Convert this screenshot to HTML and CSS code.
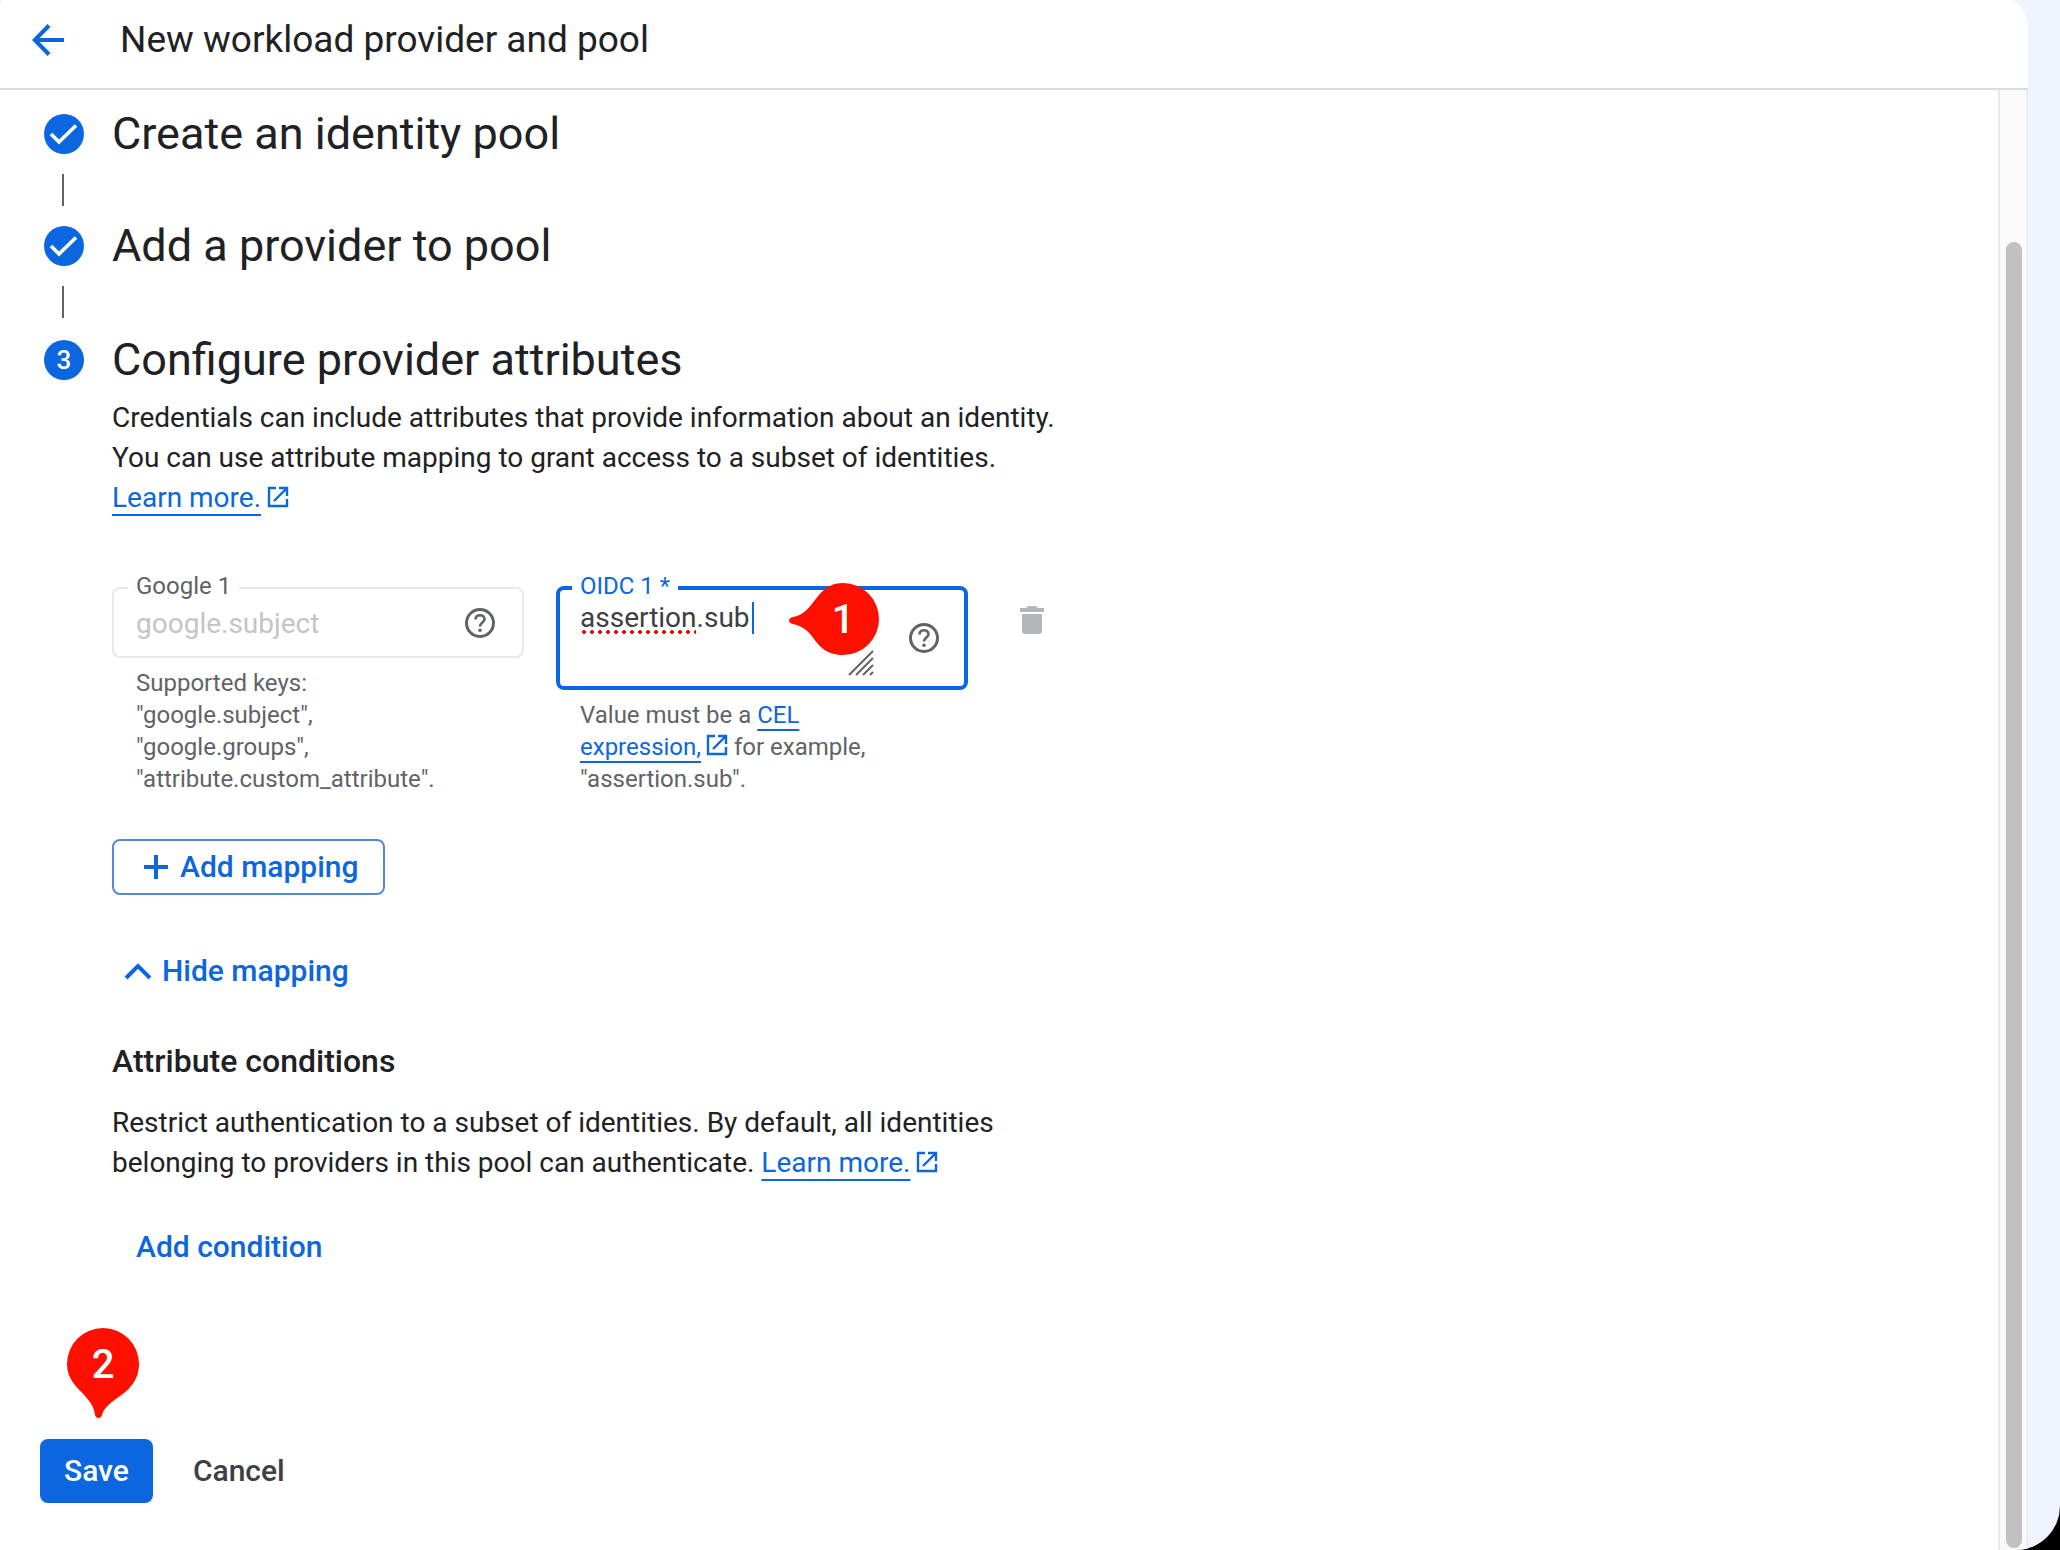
FILE: index.html
```html
<!DOCTYPE html>
<html lang="en">
<head>
    <meta charset="UTF-8">
    <meta name="viewport" content="width=device-width, initial-scale=1.0">
    <title>New workload provider and pool</title>
    <link rel="stylesheet" href="styles.css">
</head>
<body>
    <div class="window">
        <div class="surface">
            <header class="topbar">
                <a href="#" class="back" aria-label="Back">
                    <svg viewBox="0 0 32 32" width="32" height="32"><path d="M17 1.5 2.8 16 17 30.500M3 16H32" fill="none" stroke="currentColor" stroke-width="4"/></svg>
                </a>
                <h1>New workload provider and pool</h1>
            </header>

            <div class="body">
                <main class="content">
                    <ol class="steps">
                        <li class="step">
                            <span class="badge"><svg viewBox="0 0 40 40" width="40" height="40"><path d="M7 20 15 28 32 11.500" fill="none" stroke="currentColor" stroke-width="3.600"/></svg></span>
                            <h2>Create an identity pool</h2>
                        </li>
                        <li class="step">
                            <span class="badge"><svg viewBox="0 0 40 40" width="40" height="40"><path d="M7 20 15 28 32 11.500" fill="none" stroke="currentColor" stroke-width="3.600"/></svg></span>
                            <h2>Add a provider to pool</h2>
                        </li>
                        <li class="step">
                            <span class="badge">3</span>
                            <h2>Configure provider attributes</h2>
                        </li>
                    </ol>

                    <form class="details" id="mappingForm">
                        <p>
                            Credentials can include attributes that provide information about an identity.<br>
                            You can use attribute mapping to grant access to a subset of identities.<br>
                            <a href="#">Learn more.</a>
                            <svg class="ext" viewBox="0 0 22 22" width="22" height="22"><path d="M9 2H2V20H20V13M12 2H20V10M19.500 2.500 7 15" fill="none" stroke="currentColor" stroke-width="2.400"/></svg>
                        </p>

                        <div class="mapping">
                            <div class="field">
                                <fieldset class="box">
                                    <legend><label for="google1">Google 1</label></legend>
                                    <div class="control">
                                        <input type="text" id="google1" value="google.subject" disabled>
                                        <svg class="help" viewBox="0 0 32 32" width="32" height="32"><circle cx="16" cy="16" r="13.500" fill="none" stroke="currentColor" stroke-width="3"/><path d="M11.500 12.500c0-2.800 2-4.300 4.500-4.300s4.500 1.600 4.500 4c0 3.300-4.500 3.500-4.500 7.300" fill="none" stroke="currentColor" stroke-width="2.600"/><circle cx="16" cy="23.200" r="1.800" fill="currentColor"/></svg>
                                    </div>
                                </fieldset>
                                <p class="hint">Supported keys: "google.subject", "google.groups", "attribute.custom_attribute".</p>
                            </div>

                            <div class="field">
                                <fieldset class="box focused">
                                    <legend><label for="oidc1">OIDC 1 *</label></legend>
                                    <div class="control">
                                        <div class="editor">
                                            <textarea id="oidc1" spellcheck="false">assertion.sub</textarea>
                                            <span class="misspelled"></span>
                                            <span class="caret"></span>
                                            <svg class="grip" viewBox="0 0 26 26" width="26" height="26"><path d="M1 25 25 1M8 25 25 8M15 25 25 15M22 25 25 22" fill="none" stroke="currentColor" stroke-width="2"/></svg>
                                            <span class="pin pin-left">
                                                <svg viewBox="0 0 90 72" width="90" height="72"><path d="M54 0A36 36 0 0 1 54 72C37 72 30 63 22 52C17 46 12 43 4 41Q0 40 0 37.500Q0 35 4 34C13 32 17 28 22 22C31 11 37 0 54 0Z" fill="currentColor"/></svg>
                                                <b>1</b>
                                            </span>
                                        </div>
                                        <svg class="help" viewBox="0 0 32 32" width="32" height="32"><circle cx="16" cy="16" r="13.500" fill="none" stroke="currentColor" stroke-width="3"/><path d="M11.500 12.500c0-2.800 2-4.300 4.500-4.300s4.500 1.600 4.500 4c0 3.300-4.500 3.500-4.500 7.300" fill="none" stroke="currentColor" stroke-width="2.600"/><circle cx="16" cy="23.200" r="1.800" fill="currentColor"/></svg>
                                    </div>
                                </fieldset>
                                <p class="hint">Value must be a <a href="#">CEL expression,</a> <svg class="ext" viewBox="0 0 22 22" width="22" height="22"><path d="M9 2H2V20H20V13M12 2H20V10M19.500 2.500 7 15" fill="none" stroke="currentColor" stroke-width="2.400"/></svg> for example, "assertion.sub".</p>
                            </div>

                            <button type="button" class="delete" aria-label="Delete mapping" disabled>
                                <svg viewBox="0 0 24 28" width="24" height="28"><path d="M0 2H6L8 0H16L18 2H24V6H0ZM2 8H22V25Q22 28 19 28H5Q2 28 2 25Z" fill="currentColor"/></svg>
                            </button>
                        </div>

                        <button type="button" class="btn outlined">
                            <svg viewBox="0 0 24 24" width="24" height="24"><path d="M12 0V24M0 12H24" stroke="currentColor" stroke-width="4"/></svg>
                            Add mapping
                        </button>

                        <button type="button" class="btn toggle">
                            <svg viewBox="0 0 28 18" width="28" height="18"><path d="M2 16 14 4 26 16" fill="none" stroke="currentColor" stroke-width="4"/></svg>
                            Hide mapping
                        </button>

                        <h3>Attribute conditions</h3>
                        <p>
                            Restrict authentication to a subset of identities. By default, all identities<br>
                            belonging to providers in this pool can authenticate. <a href="#">Learn more.</a>
                            <svg class="ext" viewBox="0 0 22 22" width="22" height="22"><path d="M9 2H2V20H20V13M12 2H20V10M19.500 2.500 7 15" fill="none" stroke="currentColor" stroke-width="2.400"/></svg>
                        </p>

                        <button type="button" class="btn condition">Add condition</button>
                    </form>

                    <div class="actions">
                        <button type="submit" form="mappingForm" class="btn save">Save</button>
                        <button type="button" class="btn cancel">Cancel</button>
                        <span class="pin pin-down">
                            <svg viewBox="0 0 72 90" width="72" height="90"><path d="M0 36A36 36 0 0 1 72 36C72 53 61 63 50 70C42 76 37 80 35 87Q34 90 31.500 90Q29 90 28 87C27 79 24 75 18 68C9 58 0 51 0 36Z" fill="currentColor"/></svg>
                            <b>2</b>
                        </span>
                    </div>
                </main>

                <div class="scrollbar"><div class="thumb"></div></div>
            </div>
        </div>
    </div>
</body>
</html>
```

FILE: styles.css
```css
* {
    box-sizing: border-box;
    margin: 0;
    padding: 0;
}

html {
    background: #000;
}

body {
    font-family: "Google Sans Text", Roboto, sans-serif;
    font-size: 28px;
    line-height: 40px;
    color: #202124;
}

.window {
    display: flex;
    min-height: 100vh;
    padding-right: 32px;
    overflow: hidden;
    background: #eff4fe;
    border-bottom-right-radius: 44px;
}

/* White panel, tucked slightly under the top edge */
.surface {
    flex: 1;
    display: flex;
    flex-direction: column;
    margin-top: -4px;
    background: #fff;
    border-radius: 12px 32px 0 0;
}

/* Header */
.topbar {
    display: flex;
    align-items: center;
    gap: 56px;
    height: 94px;
    padding: 0 32px 4px;
    border-bottom: 2px solid #dadce0;
}

.back {
    display: flex;
    color: #0b66e0;
}

h1 {
    font-size: 37px;
    font-weight: 400;
    line-height: 48px;
}

.body {
    flex: 1;
    display: flex;
}

.content {
    flex: 1;
    padding: 16px 40px 44px;
}

/* Steps */
.steps {
    list-style: none;
}

.step {
    position: relative;
    display: flex;
    align-items: center;
    gap: 28px;
    height: 56px;
    padding-left: 4px;
    margin-bottom: 56px;
}

.step:last-child {
    height: 60px;
    margin-bottom: 8px;
}

.step:not(:last-child)::after {
    content: "";
    position: absolute;
    left: 22px;
    top: 68px;
    width: 2px;
    height: 32px;
    background: #5f6368;
}

.badge {
    width: 40px;
    height: 40px;
    border-radius: 50%;
    background: #0b66e0;
    color: #fff;
    font-size: 26px;
    font-weight: 500;
    text-align: center;
}

.badge svg {
    display: block;
}

h2 {
    font-size: 45px;
    font-weight: 400;
    line-height: 56px;
}

.details {
    display: flex;
    flex-direction: column;
    align-items: flex-start;
    padding-left: 72px;
}

a {
    color: #0b66e0;
    text-decoration: underline;
    text-decoration-thickness: 2px;
    text-underline-offset: 7px;
}

.ext {
    margin-left: -1px;
    color: #0b66e0;
    vertical-align: -1px;
}

/* Mapping fields */
.mapping {
    display: flex;
    align-items: flex-start;
    gap: 32px;
    margin: 56px 0 44px;
}

.field {
    width: 412px;
}

.box {
    min-width: 0;
    padding: 0 26px 10px 22px;
    border: 2px solid #e8e8e8;
    border-radius: 8px;
}

.box legend {
    margin-left: -8px;
    padding: 0 8px 4px;
    font-size: 24px;
    line-height: 24px;
    color: #5f6368;
}

.box.focused {
    padding: 0 24px 10px 20px;
    border: 4px solid #0b66e0;
}

.box.focused legend {
    color: #0b66e0;
}

.control {
    display: flex;
    align-items: center;
    justify-content: space-between;
    margin-top: -2px;
}

.control input,
.control textarea {
    width: 100%;
    border: none;
    outline: none;
    background: none;
    font: inherit;
    color: #3c4043;
}

.control input {
    height: 46px;
    min-width: 0;
}

.control input:disabled {
    color: #c4c4c4;
}

.editor {
    position: relative;
    width: 294px;
    height: 76px;
}

.control textarea {
    display: block;
    height: 76px;
    padding-top: 2px;
    line-height: 32px;
    resize: none;
}

.misspelled {
    position: absolute;
    left: 0;
    top: 30px;
    width: 116px;
    height: 4px;
    background: radial-gradient(circle, #f00 2px, transparent 2px) 0 0 / 8px 4px;
}

.caret {
    position: absolute;
    left: 172px;
    top: 2px;
    width: 2px;
    height: 32px;
    background: #0b66e0;
}

.grip {
    position: absolute;
    right: 0;
    bottom: 0;
    color: #5f6368;
}

.help {
    flex-shrink: 0;
    color: #5f6368;
}

.hint {
    padding: 9px 72px 0 24px;
    font-size: 24px;
    line-height: 32px;
    color: #5f6368;
}

.hint a {
    text-underline-offset: 6px;
}

.delete {
    margin: 32px 0 0 20px;
    border: none;
    background: none;
    color: #b5b6b8;
}

.delete svg {
    display: block;
}

/* Buttons */
.btn {
    display: flex;
    align-items: center;
    border: none;
    border-radius: 8px;
    background: none;
    font: inherit;
    font-size: 30px;
    font-weight: 500;
    color: #0b66e0;
    cursor: pointer;
}

.outlined {
    gap: 12px;
    height: 56px;
    padding: 0 24px 0 30px;
    border: 2px solid #5a87d0;
}

.toggle {
    gap: 10px;
    margin: 56px 0 0 12px;
}

h3 {
    margin: 48px 0 20px;
    font-size: 32px;
    font-weight: 500;
    line-height: 44px;
}

.condition {
    margin: 44px 0 0 24px;
}

/* Footer */
.actions {
    position: relative;
    display: flex;
    gap: 16px;
    margin-top: 172px;
}

.actions .btn {
    height: 64px;
    padding: 0 24px;
}

.actions .save {
    background: #0b66e0;
    color: #fff;
}

.actions .cancel {
    color: #3c4043;
}

/* Numbered callouts */
.pin {
    position: absolute;
    color: #ff0f00;
}

.pin svg {
    display: block;
}

.pin b {
    position: absolute;
    left: 0;
    top: 0;
    width: 72px;
    font-size: 40px;
    font-weight: 500;
    line-height: 74px;
    text-align: center;
    color: #fff;
}

.pin-left {
    left: 209px;
    top: -17px;
}

.pin-left b {
    left: 18px;
}

.pin-down {
    left: 27px;
    top: -111px;
}

/* Scrollbar */
.scrollbar {
    width: 30px;
    padding: 152px 4px 2px 6px;
    border-left: 2px solid #e8e8e8;
    border-right: 2px solid #ededed;
    background: #fafafa;
}

.thumb {
    width: 16px;
    height: 100%;
    border-radius: 8px;
    background: #c1c1c1;
}
```
